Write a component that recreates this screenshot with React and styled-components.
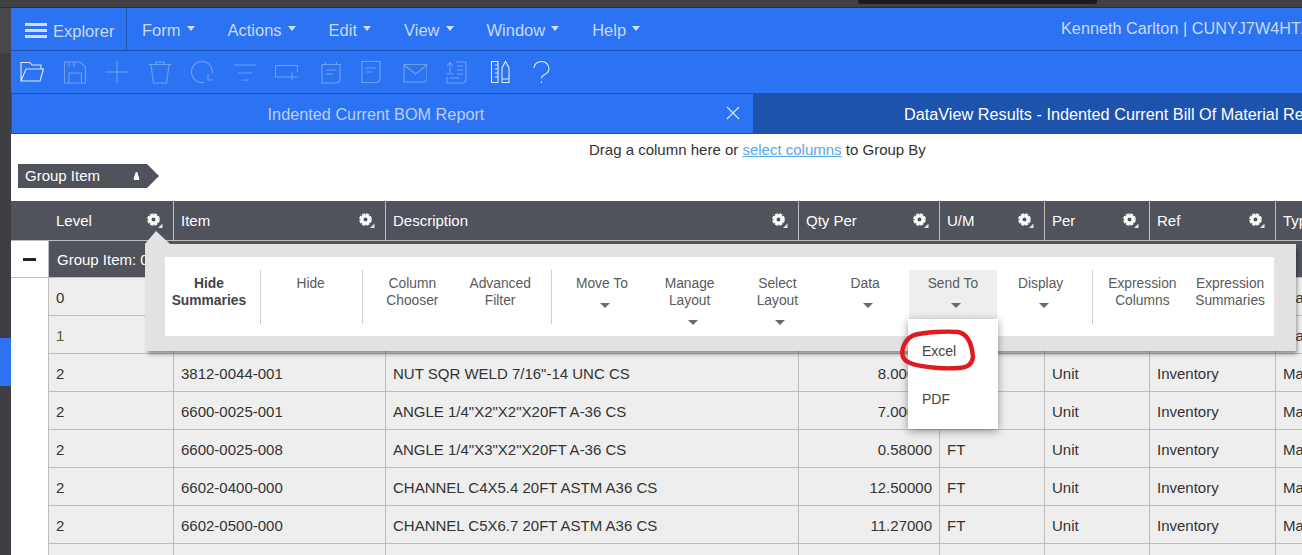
import React from "react";
import styled, { createGlobalStyle } from "styled-components";

const Global = createGlobalStyle`
  html, body { margin: 0; padding: 0; background: #fff; overflow: hidden; }
  * { box-sizing: border-box; }
`;

const BLUE = "#2b73f2";
const DEEP = "#1d52ad";
const SLATE = "#50535b";
const COLUMNS = "38px 125px 212px 413px 141px 105px 105px 126px 200px";

const Page = styled.div`
  width: 1302px; height: 555px; overflow: hidden;
  display: flex; flex-direction: column;
  font-family: "Liberation Sans", Arial, sans-serif; color: #333;
`;
const TopStrip = styled.div`
  height: 8px; flex: none; background: #3f3f44; border-bottom: 1px solid #2e2e32;
`;
const Notch = styled.div`
  width: 239px; height: 4px; margin-left: 858px; background: #1b1b1d; border-radius: 0 0 3px 3px;
`;
const Body = styled.div`display: flex; flex: 1; min-height: 0;`;
const Rail = styled.div`
  width: 11px; flex: none; display: flex; flex-direction: column; background: #3e3e43;
`;
const RailTop = styled.div`height: 45px; background: #48484c;`;
const RailGap = styled.div`height: 285px;`;
const RailActive = styled.div`height: 48px; background: ${BLUE};`;
const Main = styled.div`flex: 1; min-width: 0; display: flex; flex-direction: column;`;

const Nav = styled.div`
  height: 43px; flex: none; display: flex; align-items: stretch; background: ${BLUE};
  border-bottom: 1px solid ${DEEP}; color: #c9d9fc; font-size: 16.5px;
`;
const Explorer = styled.div`
  width: 116px; padding-left: 14px; display: flex; align-items: center; gap: 6px;
  border-right: 1px solid ${DEEP}; font-size: 16.5px; padding-top: 4px;
`;
const Burger = styled.span`
  width: 22px; height: 15px; margin-top: -1px; display: block;
  border-top: 3px solid #d3e0fd; border-bottom: 3px solid #d3e0fd; position: relative;
  &::after { content: ""; position: absolute; left: 0; right: 0; top: 3px; height: 3px; background: #d3e0fd; }
`;
const Menus = styled.div`display: flex; align-items: center; gap: 33px; padding-left: 15px; padding-top: 2px;`;
const Menu = styled.div`display: flex; align-items: center; gap: 6px;`;
const MenuCaret = styled.span`
  width: 0; height: 0; margin-top: -3px;
  border-left: 4px solid transparent; border-right: 4px solid transparent; border-top: 5px solid #d3e0fd;
`;
const User = styled.div`
  margin-left: auto; width: 241px; padding-top: 11px; white-space: nowrap; overflow: hidden; flex: none; font-size: 16.25px;
`;

const Toolbar = styled.div`
  height: 43px; flex: none; display: flex; align-items: center; padding-left: 0; background: ${BLUE};
  border-bottom: 1px solid ${DEEP};
`;
const ToolIcon = styled.svg`
  width: 24px; height: 24px; flex: none; margin-left: ${p => p.$first ? "9px" : "18.5px"};
  fill: none; stroke: #fff; stroke-width: 1.1; opacity: ${p => p.$on ? 0.85 : 0.32};
`;

const Tabs = styled.div`height: 40px; flex: none; display: flex; border-bottom: 1px solid ${DEEP}; font-size: 16.25px;`;
const TabIdle = styled.div`
  position: relative; width: 743px; flex: none; display: flex; align-items: center; justify-content: center;
  padding: 1px 13px 0 0; background: ${BLUE}; color: #bcd0fa;
  border-left: 1px solid ${DEEP}; border-right: 1px solid ${DEEP};
`;
const TabClose = styled.svg`
  position: absolute; right: 13px; top: 12px; width: 14px; height: 14px; stroke: #d3e0fd; stroke-width: 1.4;
`;
const TabActive = styled.div`
  flex: 1; min-width: 0; display: flex; align-items: center; padding: 1px 0 0 150px; background: ${DEEP};
  color: #fff; white-space: nowrap; overflow: hidden;
`;

const GroupArea = styled.div`height: 67px; flex: none; background: #fff; padding: 7px 0 0 7px; font-size: 15px;`;
const DragHint = styled.div`height: 23px; padding-left: 571px; line-height: 18px; white-space: nowrap;`;
const HintLink = styled.a`color: #58a8e8; text-decoration: underline;`;
const Chip = styled.div`
  width: 141px; height: 24px; display: flex; align-items: center; padding: 0 0 2px 7px;
  background: ${SLATE}; color: #fff; font-size: 15px;
  clip-path: polygon(0 0, 129px 0, 141px 12px, 129px 24px, 0 24px);
`;
const ChipMark = styled.svg`width: 7px; height: 8px; margin: 1px 0 0 33px; fill: #fff;`;

const Grid = styled.div`position: relative; flex: 1; min-height: 0; font-size: 15px;`;
const HeaderRow = styled.div`
  display: grid; grid-template-columns: ${COLUMNS}; height: 40px; background: ${SLATE}; color: #fff;
  border-bottom: 1px solid #bdbdbd;
`;
const HeadCell = styled.div`
  display: flex; align-items: center; justify-content: space-between; padding: 0 10px 1px 7px;
  white-space: nowrap; overflow: hidden;
  border-right: ${p => p.$plain ? "none" : "1px solid #bdbdbd"};
`;
const Gear = styled.svg`width: 16px; height: 15px; flex: none; margin-top: 0;`;
const GroupRow = styled.div`
  display: grid; grid-template-columns: 38px 1fr; height: 37px; border-bottom: 1px solid #bdbdbd;
`;
const Toggle = styled.div`
  display: flex; align-items: center; justify-content: center; background: #fff; border-right: 1px solid #bdbdbd;
  &::before { content: ""; width: 13px; height: 3px; background: #222; margin-right: 1px; }
`;
const GroupLabel = styled.div`
  background: ${SLATE}; color: #fff; display: flex; align-items: center; padding-left: 8px;
`;
const DataRow = styled.div`display: grid; grid-template-columns: ${COLUMNS}; height: 38px;`;
const Gutter = styled.div`background: #fff; border-right: 1px solid #bdbdbd;`;
const Cell = styled.div`
  background: #eee; border-right: 1px solid #bdbdbd; border-bottom: 1px solid #bdbdbd;
  display: flex; align-items: center; padding: 1px 7px 0; white-space: nowrap; overflow: hidden;
  justify-content: ${p => p.$right ? "flex-end" : "flex-start"};
  color: ${p => p.$tint || "#333"};
`;

const Popup = styled.div`
  position: absolute; left: 134px; top: 43px; width: 1151px; height: 107px;
  padding: 13px 22px 14px 20px; background: #e2e2e2; box-shadow: 2px 4px 4px -1px rgba(0,0,0,.4);
  &::before {
    content: ""; position: absolute; left: 0; top: -13px; width: 25px; height: 13px; background: #e2e2e2;
    clip-path: polygon(0 100%, 11px 0, 25px 100%);
  }
`;
const Ribbon = styled.div`
  height: 79px; background: #fff; padding-top: 13px; display: flex; align-items: flex-start;
  font-size: 13.8px; line-height: 17px; color: #5a5a5a;
`;
const Action = styled.div`
  position: relative; flex: 1 1 0; height: 54px; padding-top: 5px; text-align: center;
  font-weight: ${p => p.$bold ? 700 : 400}; color: ${p => p.$bold ? "#444" : "inherit"};
  background: ${p => p.$open ? "#eee" : "transparent"};
`;
const ActionCaret = styled.span`
  display: block; width: 0; height: 0; margin: 11px auto 0; position: relative; left: 3px;
  border-left: 5px solid transparent; border-right: 5px solid transparent; border-top: 5px solid #6a6a6a;
`;
const Rule = styled.div`
  width: 14px; flex: none; height: 54px; position: relative;
  &::after { content: ""; position: absolute; left: 7px; top: 0; bottom: 0; width: 1px; background: #cfcfcf; }
`;
const Dropdown = styled.div`
  position: absolute; left: -1px; top: 49px; width: 90px; height: 110px; padding-top: 8px; background: #fff;
  box-shadow: 0 2px 8px rgba(0,0,0,.4); text-align: left; color: #444; z-index: 2; font-size: 14px;
`;
const DropItem = styled.div`height: 48px; display: flex; align-items: center; padding-left: 14px;`;
const Scribble = styled.svg`
  position: absolute; left: -10px; top: 8px; width: 90px; height: 50px; overflow: visible;
  fill: none; stroke: #e01a1e; stroke-width: 4.4; stroke-linecap: round;
`;

const toolPaths = [
  { on: true, d: "M1 21V2.5H10L12 5H21V9M1 21L6 9H23.5L20 21Z" },
  { d: "M1.5 2H17L22.5 7V23H1.5ZM6 2.5V7M11 2.5V7M6 23V13H18.5V23" },
  { d: "M12 1V23M1 12H23" },
  { d: "M1 4.5H23M8 4V2H16V4M3 5L5.5 23H18.5L21 5" },
  { d: "M14 22.3A10.5 10.5 0 1 1 22.4 13.5M18 14V20H23" },
  { d: "M1 5H23M5 13H19M8.5 20H15.5" },
  { d: "M22.5 12V5.5H.5V17H12M17 12.5V20.5M11.5 17H22.5" },
  { d: "M4 4.5H22V19Q22 23 18 23H4ZM7.5 2V5M18.5 2V5M8 10H18M8 14H15" },
  { d: "M2 1.5H20V18Q20 22.5 15.5 22.5H2ZM6 8H16M6 12H12" },
  { d: "M1 4.5H24V18Q24 22 20 22H1ZM1 5L12.5 14L24 5" },
  { d: "M11 2H21V19Q21 23 17 23H2V17M5 13V3M2 6L5 2.5L8 6M12 6H18M12 10H18M12 14H18M1 14H9M4 18H14" },
  { on: true, d: "M3.5 1.5H10V22.5H3.5ZM7 5H10M7 9H10M7 13H10M7 17H10M14 22.5V8L17.5 1.5L21 8V22.5ZM14 19H21" },
  { on: true, d: "M4 8C4 4 7.5 1.5 11.5 1.5C15.5 1.5 19 4.5 19 8.5C19 12 16 14 14 15C12.5 15.8 11.5 16 11.5 18.5M11.5 21.5V23" },
];

const menus = ["Form", "Actions", "Edit", "View", "Window", "Help"];
const heads = ["Level", "Item", "Description", "Qty Per", "U/M", "Per", "Ref", "Type"];
const rows = [
  { level: "0", type: "Make" },
  { level: "1", tint: "#6b5a1e", type: "Make" },
  { level: "2", item: "3812-0044-001", desc: 'NUT SQR WELD 7/16"-14 UNC CS', qty: "8.00000", um: "FT", per: "Unit", ref: "Inventory", type: "Make" },
  { level: "2", item: "6600-0025-001", desc: 'ANGLE 1/4"X2"X2"X20FT A-36 CS', qty: "7.00000", um: "FT", per: "Unit", ref: "Inventory", type: "Make" },
  { level: "2", item: "6600-0025-008", desc: 'ANGLE 1/4"X3"X2"X20FT A-36 CS', qty: "0.58000", um: "FT", per: "Unit", ref: "Inventory", type: "Make" },
  { level: "2", item: "6602-0400-000", desc: "CHANNEL C4X5.4 20FT ASTM A36 CS", qty: "12.50000", um: "FT", per: "Unit", ref: "Inventory", type: "Make" },
  { level: "2", item: "6602-0500-000", desc: "CHANNEL C5X6.7 20FT ASTM A36 CS", qty: "11.27000", um: "FT", per: "Unit", ref: "Inventory", type: "Make" },
  {},
];

const actions = [
  { lines: ["Hide", "Summaries"], bold: true }, "rule",
  { lines: ["Hide"] }, "rule",
  { lines: ["Column", "Chooser"] },
  { lines: ["Advanced", "Filter"] }, "rule",
  { lines: ["Move To"], caret: true },
  { lines: ["Manage", "Layout"], caret: true },
  { lines: ["Select", "Layout"], caret: true },
  { lines: ["Data"], caret: true },
  { lines: ["Send To"], caret: true, open: true },
  { lines: ["Display"], caret: true }, "rule",
  { lines: ["Expression", "Columns"] },
  { lines: ["Expression", "Summaries"] },
];

const GearIcon = () => (
  <Gear viewBox="0 0 16 15">
    <circle cx="6.5" cy="6.5" r="3.6" fill="none" stroke="#fff" strokeWidth="3.2" />
    <circle cx="6.5" cy="6.5" r="5.6" fill="none" stroke="#fff" strokeWidth="1.4" strokeDasharray="3.2 1.2" />
    <path d="M15.5 10.5V15H11Z" fill="#e6e6e6" />
  </Gear>
);

export default function App() {
  return (
    <Page>
      <Global />
      <TopStrip><Notch /></TopStrip>
      <Body>
        <Rail>
          <RailTop />
          <RailGap />
          <RailActive />
        </Rail>
        <Main>
          <Nav>
            <Explorer><Burger />Explorer</Explorer>
            <Menus>
              {menus.map(m => <Menu key={m}>{m}<MenuCaret /></Menu>)}
            </Menus>
            <User>Kenneth Carlton | CUNYJ7W4HTZ</User>
          </Nav>
          <Toolbar>
            {toolPaths.map((t, i) => (
              <ToolIcon key={i} viewBox="0 0 24 24" $first={i === 0} $on={t.on}><path d={t.d} /></ToolIcon>
            ))}
          </Toolbar>
          <Tabs>
            <TabIdle>
              Indented Current BOM Report
              <TabClose viewBox="0 0 14 14"><path d="M1 1L13 13M13 1L1 13" /></TabClose>
            </TabIdle>
            <TabActive>DataView Results - Indented Current Bill Of Material Report</TabActive>
          </Tabs>
          <GroupArea>
            <DragHint>Drag a column here or <HintLink>select columns</HintLink> to Group By</DragHint>
            <Chip>
              Group Item
              <ChipMark viewBox="0 0 8 9"><path d="M4 0C5 0 5.4 1 5.8 3L7 6.5V9H1V6.5L2.2 3C2.6 1 3 0 4 0Z" /></ChipMark>
            </Chip>
          </GroupArea>
          <Grid>
            <HeaderRow>
              <HeadCell $plain />
              {heads.map(h => <HeadCell key={h}>{h}<GearIcon /></HeadCell>)}
            </HeaderRow>
            <GroupRow>
              <Toggle />
              <GroupLabel>Group Item: 0</GroupLabel>
            </GroupRow>
            {rows.map((r, i) => (
              <DataRow key={i}>
                <Gutter />
                <Cell $tint={r.tint}>{r.level}</Cell>
                <Cell>{r.item}</Cell>
                <Cell>{r.desc}</Cell>
                <Cell $right>{r.qty}</Cell>
                <Cell>{r.um}</Cell>
                <Cell>{r.per}</Cell>
                <Cell>{r.ref}</Cell>
                <Cell>{r.type}</Cell>
              </DataRow>
            ))}
            <Popup>
              <Ribbon>
                {actions.map((a, i) => a === "rule" ? <Rule key={i} /> : (
                  <Action key={i} $bold={a.bold} $open={a.open}>
                    {a.lines.map(l => <div key={l}>{l}</div>)}
                    {a.caret && <ActionCaret />}
                    {a.open && (
                      <Dropdown>
                        <DropItem>Excel</DropItem>
                        <DropItem>PDF</DropItem>
                        <Scribble viewBox="0 0 90 50">
                          <path d="M17 8C26 5 48 4 60 5C70 7 74 18 75 30C74 38 68 41 60 41C50 42 25 41 12 36C4 33 2 26 7 16C10 11 14 8 20 7" />
                        </Scribble>
                      </Dropdown>
                    )}
                  </Action>
                ))}
              </Ribbon>
            </Popup>
          </Grid>
        </Main>
      </Body>
    </Page>
  );
}
